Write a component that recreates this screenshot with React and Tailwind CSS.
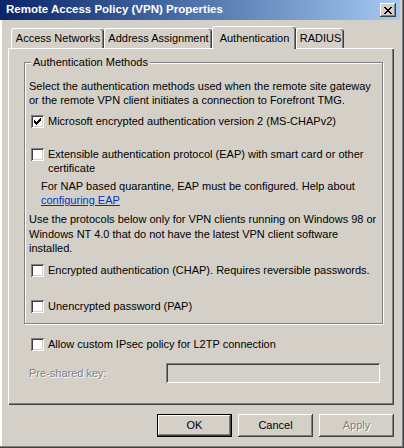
import React from "react";

function Check() {
  return (
    <svg width="7" height="7" viewBox="0 0 7 7" shapeRendering="crispEdges" className="block">
      <path
        fill="#000"
        d="M6 0h1v1h-1z M5 1h2v1h-2z M0 2h1v1h-1z M4 2h3v1h-3z M0 3h2v1h-2z M3 3h3v1h-3z M0 4h5v1h-5z M1 5h3v1h-3z M2 6h1v1h-1z"
      />
    </svg>
  );
}

function Box({ checked }) {
  return (
    <span className="shrink-0 w-[13px] h-[13px] bg-white flex items-center justify-center shadow-[inset_1px_1px_#808080,inset_-1px_-1px_#ffffff,inset_2px_2px_#404040,inset_-2px_-2px_#d4d0c8]">
      {checked ? <Check /> : null}
    </span>
  );
}

function CheckRow({ checked, children, className = "" }) {
  return (
    <div className={"flex items-start gap-[4px] " + className}>
      <span className="pt-[1px]">
        <Box checked={checked} />
      </span>
      <div className="leading-[14px]">{children}</div>
    </div>
  );
}

function Tab({ label, w, selected }) {
  if (selected) {
    return (
      <div
        className={
          "relative z-10 mb-[-1px] h-[23px] bg-[#d4d0c8] flex items-start justify-center pt-[3px] rounded-t-[3px] border-l border-t border-white shadow-[inset_-1px_0_#404040,inset_-2px_0_#808080] " +
          w
        }
      >
        {label}
      </div>
    );
  }
  return (
    <div
      className={
        "h-[20px] bg-[#d4d0c8] flex items-center justify-center rounded-t-[3px] border-l border-t border-white shadow-[inset_-1px_0_#404040,inset_-2px_0_#808080] " +
        w
      }
    >
      {label}
    </div>
  );
}

function Button({ children, def, disabled }) {
  return (
    <div
      className={
        "w-[75px] h-[23px] flex items-center justify-center bg-[#d4d0c8] " +
        (def
          ? "border border-black shadow-[inset_-1px_-1px_#404040,inset_1px_1px_#ffffff,inset_-2px_-2px_#808080]"
          : "shadow-[inset_-1px_-1px_#404040,inset_1px_1px_#ffffff,inset_-2px_-2px_#808080,inset_2px_2px_#d4d0c8]") +
        (disabled ? " text-[#808080] [text-shadow:1px_1px_0_#ffffff]" : "")
      }
    >
      {children}
    </div>
  );
}

export default function App() {
  return (
    <div className="w-[404px] h-[448px] bg-[#d4d0c8] font-['Liberation_Sans',Arial,sans-serif] text-[11px] text-black flex flex-col pr-[4px] pb-[2px] shadow-[inset_-1px_-1px_#404040,inset_-2px_-2px_#808080,inset_2px_0_#ffffff]">
      {/* Title bar */}
      <div className="h-[20px] shrink-0 bg-linear-to-r from-[#0a246a] to-[#a6caf0] flex items-center justify-between pl-[6px] pr-[4px]">
        <span className="text-white font-bold text-[11.5px] leading-none">Remote Access Policy (VPN) Properties</span>
        <div className="w-[16px] h-[14px] bg-[#d4d0c8] flex items-center justify-center shadow-[inset_-1px_-1px_#404040,inset_1px_1px_#ffffff,inset_-2px_-2px_#808080]">
          <svg width="8" height="7" viewBox="0 0 8 7" shapeRendering="crispEdges" className="block">
            <path
              fill="#000"
              d="M0 0h2v1h-2z M6 0h2v1h-2z M1 1h2v1h-2z M5 1h2v1h-2z M2 2h4v1h-4z M3 3h2v1h-2z M2 4h4v1h-4z M1 5h2v1h-2z M5 5h2v1h-2z M0 6h2v1h-2z M6 6h2v1h-2z"
            />
          </svg>
        </div>
      </div>

      {/* Body */}
      <div className="flex-1 flex flex-col pl-[8px] pr-[6px] pt-[6px]">
        {/* Tabs */}
        <div className="flex items-end h-[22px] pl-[3px]">
          <Tab label="Access Networks" w="w-[93px]" />
          <Tab label="Address Assignment" w="w-[108px]" />
          <Tab label="Authentication" w="w-[84px]" selected />
          <Tab label="RADIUS" w="w-[48px]" />
        </div>

        {/* Panel */}
        <div className="h-[357px] w-[386px] flex flex-col shadow-[inset_1px_1px_#ffffff,inset_-1px_-1px_#404040,inset_-2px_-2px_#808080]">
          {/* Group box */}
          <div className="relative mt-[14px] ml-[16px] mr-[11px] h-[262px] border border-[#808080] shadow-[inset_1px_1px_#ffffff,1px_1px_#ffffff] pl-[4px] pr-[4px] pt-[16px]">
            <span className="absolute top-[-8px] left-[6px] px-[2px] bg-[#d4d0c8] leading-[14px]">
              Authentication Methods
            </span>
            <p className="leading-[14px]">
              Select the authentication methods used when the remote site gateway
              <br />
              or the remote VPN client initiates a connection to Forefront TMG.
            </p>
            <CheckRow checked className="mt-[7px] pl-[2px]">
              Microsoft encrypted authentication version 2 (MS-CHAPv2)
            </CheckRow>
            <CheckRow className="mt-[19px] pl-[2px]">
              Extensible authentication protocol (EAP) with smart card or other
              <br />
              certificate
            </CheckRow>
            <p className="mt-[4px] pl-[12px] leading-[14px]">
              For NAP based quarantine, EAP must be configured. Help about
              <br />
              <span className="text-[#0033cc] underline">configuring EAP</span>
            </p>
            <p className="mt-[5px] leading-[14.5px]">
              Use the protocols below only for VPN clients running on Windows 98 or
              <br />
              Windows NT 4.0 that do not have the latest VPN client software
              <br />
              installed.
            </p>
            <CheckRow className="mt-[7px] pl-[2px]">
              Encrypted authentication (CHAP). Requires reversible passwords.
            </CheckRow>
            <CheckRow className="mt-[22px] pl-[2px]">Unencrypted password (PAP)</CheckRow>
          </div>

          <CheckRow className="mt-[13px] ml-[23px]">Allow custom IPsec policy for L2TP connection</CheckRow>

          <div className="mt-[12px] ml-[21px] flex items-center">
            <span className="w-[137px] text-[#808080] [text-shadow:1px_1px_0_#ffffff]">Pre-shared key:</span>
            <div className="w-[214px] h-[20px] bg-[#d4d0c8] shadow-[inset_1px_1px_#808080,inset_-1px_-1px_#ffffff,inset_2px_2px_#404040,inset_-2px_-2px_#d4d0c8]" />
          </div>
        </div>

        {/* Buttons */}
        <div className="mt-[9px] flex justify-end gap-[6px]">
          <Button def>OK</Button>
          <Button>Cancel</Button>
          <Button disabled>Apply</Button>
        </div>
      </div>
    </div>
  );
}
